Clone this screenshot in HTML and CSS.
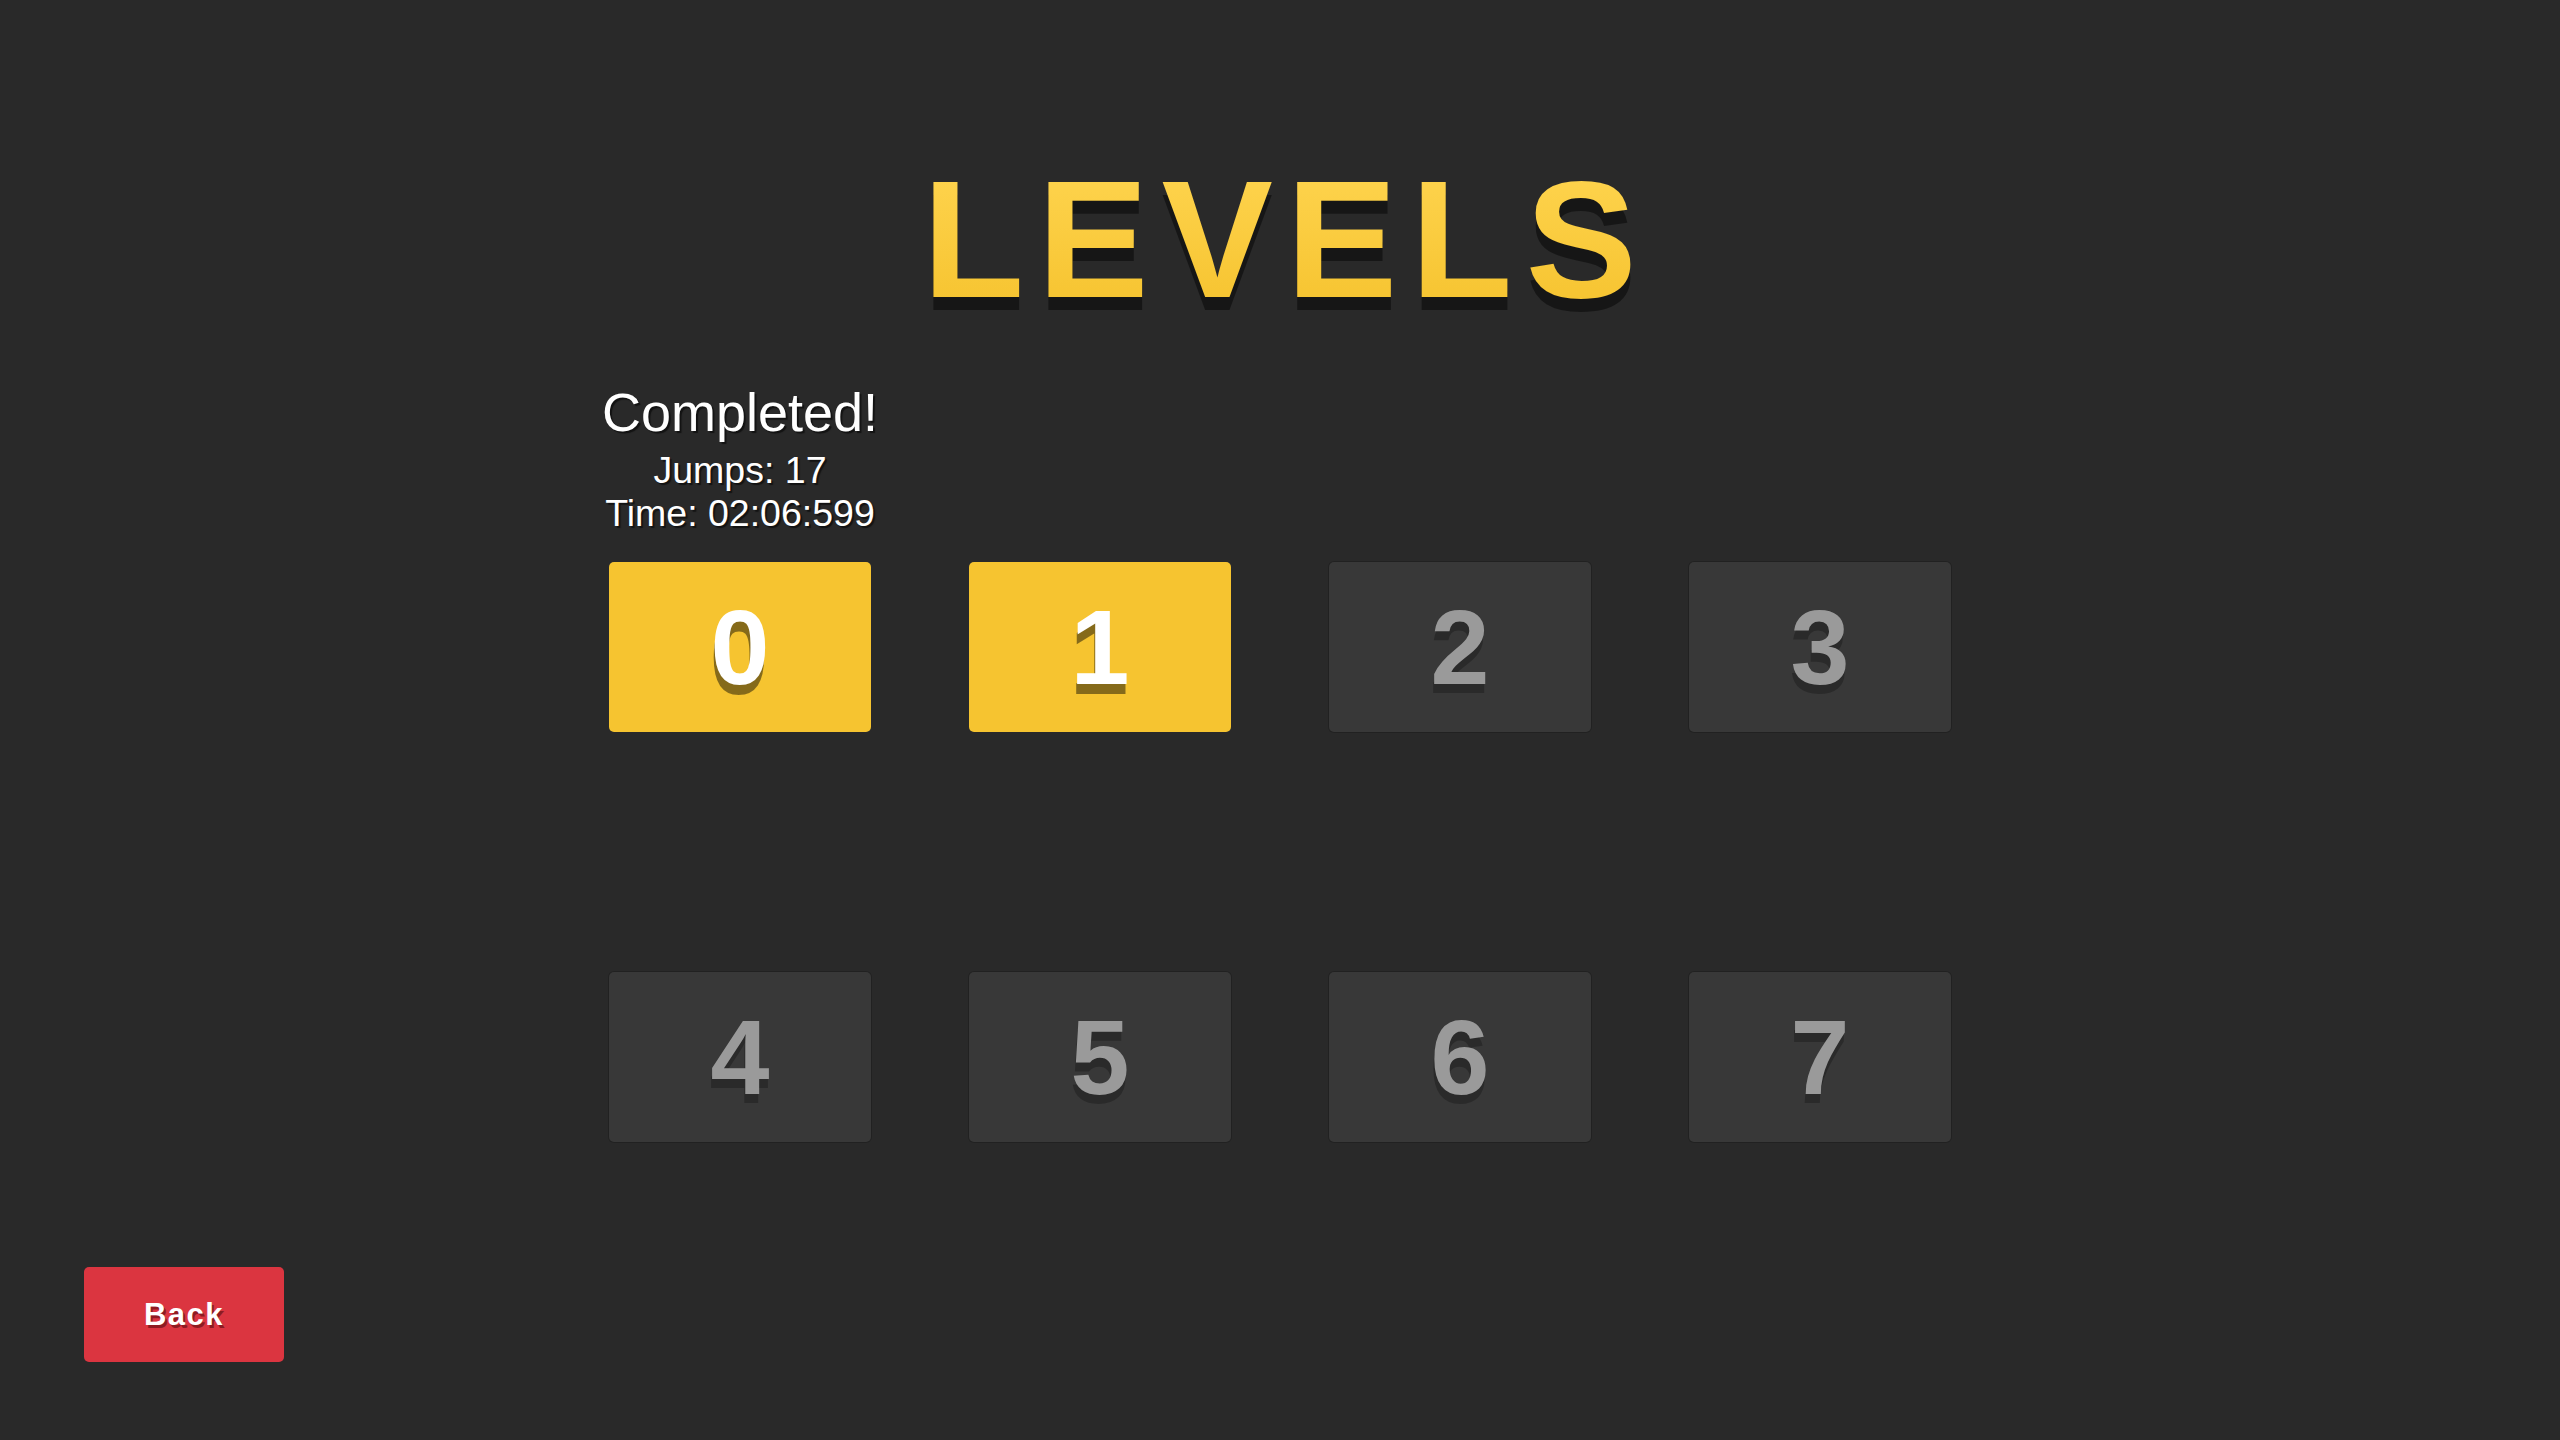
FILE: index.html
```html
<!DOCTYPE html>
<html lang="en">
<head>
<meta charset="utf-8">
<title>Levels</title>
<link rel="stylesheet" href="styles.css">
</head>
<body>
<div class="screen">
  <h1 class="title">LEVELS</h1>
  <div class="levels">
    <div class="info">
      <div class="info-head">Completed!</div>
      <div class="info-line">Jumps: 17</div>
      <div class="info-line">Time: 02:06:599</div>
    </div>
    <div class="grid">
      <button class="level done">0</button>
      <button class="level done">1</button>
      <button class="level locked">2</button>
      <button class="level locked">3</button>
      <button class="level locked">4</button>
      <button class="level locked">5</button>
      <button class="level locked">6</button>
      <button class="level locked">7</button>
    </div>
  </div>
  <div class="footer">
    <button class="back">Back</button>
  </div>
</div>
</body>
</html>
```
FILE: styles.css
```css
html, body {
  margin: 0;
  padding: 0;
  background: #292929;
}
body {
  font-family: "Liberation Sans", Arial, sans-serif;
}
.screen {
  box-sizing: border-box;
  min-height: 100vh;
  display: flex;
  flex-direction: column;
  align-items: center;
  padding: 156px 0 78px 0;
}
.title {
  margin: 0 0 0 12px;
  font-size: 167px;
  line-height: 1;
  font-weight: 700;
  letter-spacing: 13px;
  background: linear-gradient(180deg, #ffd550 0%, #f5c22d 100%);
  -webkit-background-clip: text;
  background-clip: text;
  color: transparent;
  filter: drop-shadow(0 13px 0 #161616);
}
.levels {
  display: flex;
  flex-direction: column;
  width: 1342px;
  margin-top: 63px;
}
.info {
  width: 262px;
  display: flex;
  flex-direction: column;
  align-items: center;
  color: #ffffff;
  white-space: nowrap;
  text-shadow: 2px 2px 1px rgba(0, 0, 0, 0.55);
  margin-bottom: 27px;
}
.info-head {
  font-size: 54px;
  line-height: 53px;
  margin-bottom: 10px;
}
.info-line {
  font-size: 37.5px;
  line-height: 43px;
}
.grid {
  display: grid;
  grid-template-columns: repeat(4, 262px);
  grid-auto-rows: 170px;
  column-gap: 98px;
  row-gap: 240px;
}
.level {
  border: none;
  margin: 0;
  padding: 0;
  border-radius: 5px;
  font-family: "Liberation Sans", Arial, sans-serif;
  font-weight: 700;
  font-size: 106px;
  line-height: 1;
  display: flex;
  align-items: center;
  justify-content: center;
}
.done {
  background: #f6c430;
  color: #ffffff;
  text-shadow: -1px 10px 0 rgba(0, 0, 0, 0.46);
}
.locked {
  background: #383838;
  color: #9a9a9a;
  box-shadow: 0 0 0 1px rgba(0, 0, 0, 0.18);
  text-shadow: -1px 9px 0 rgba(0, 0, 0, 0.25);
}
.footer {
  margin-top: auto;
  align-self: stretch;
  display: flex;
  padding-left: 84px;
}
.back {
  width: 200px;
  height: 95px;
  border: none;
  margin: 0;
  padding: 0;
  border-radius: 5px;
  background: #db3540;
  color: #ffffff;
  font-family: "Liberation Sans", Arial, sans-serif;
  font-weight: 700;
  font-size: 31px;
  letter-spacing: 1.5px;
  text-shadow: 2px 3px 0 rgba(90, 10, 15, 0.6);
}
```
